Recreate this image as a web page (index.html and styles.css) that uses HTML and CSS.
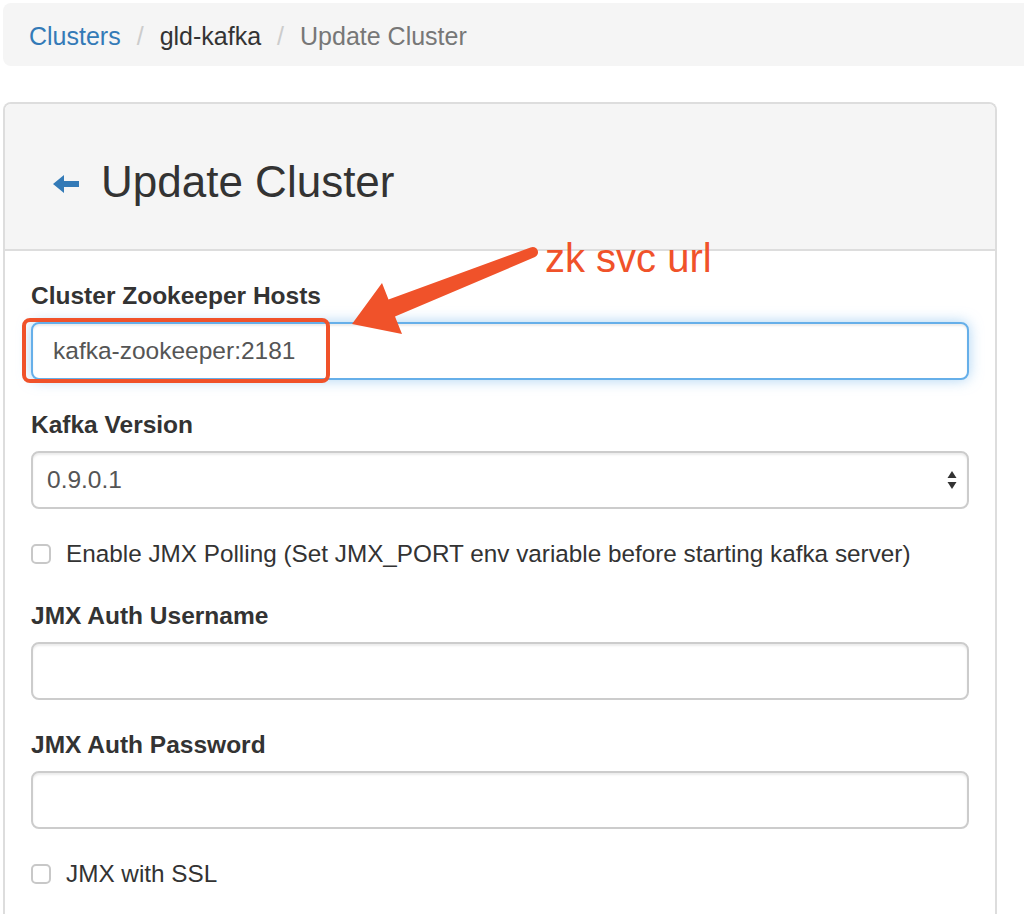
FILE: index.html
```html
<!DOCTYPE html>
<html>
<head>
<meta charset="utf-8">
<link rel="stylesheet" href="styles.css">
</head>
<body>
<div class="page">
  <nav class="breadcrumb">
    <a class="crumb-link">Clusters</a>
    <span class="sep">/</span>
    <span class="crumb">gld-kafka</span>
    <span class="sep">/</span>
    <span class="crumb-active">Update Cluster</span>
  </nav>

  <div class="panel">
    <div class="panel-heading">
      <svg class="back-icon" viewBox="0 0 26 20" width="26" height="20">
        <path d="M0 10 L11 1 L11 7 L26 7 L26 13 L11 13 L11 19 Z" fill="#337ab7"/>
      </svg>
      <h3 class="title">Update Cluster</h3>
    </div>
    <div class="panel-body">
      <div class="form-group">
        <label class="label">Cluster Zookeeper Hosts</label>
        <div class="input-wrap">
          <div class="input focused">kafka-zookeeper:2181</div>
          <div class="highlight-box"></div>
        </div>
      </div>
      <div class="form-group">
        <label class="label">Kafka Version</label>
        <div class="input select">
          <span>0.9.0.1</span>
          <svg class="select-arrows" viewBox="0 0 10 20" width="10" height="20">
            <path d="M5 1 L9.5 8 L0.5 8 Z" fill="#333"/>
            <path d="M5 19 L9.5 12 L0.5 12 Z" fill="#333"/>
          </svg>
        </div>
      </div>
      <div class="form-group checkbox-row">
        <span class="checkbox"></span>
        <span class="check-text">Enable JMX Polling (Set JMX_PORT env variable before starting kafka server)</span>
      </div>
      <div class="form-group">
        <label class="label">JMX Auth Username</label>
        <div class="input"></div>
      </div>
      <div class="form-group">
        <label class="label">JMX Auth Password</label>
        <div class="input"></div>
      </div>
      <div class="form-group checkbox-row">
        <span class="checkbox"></span>
        <span class="check-text">JMX with SSL</span>
      </div>
    </div>
  </div>

  <svg class="annotation" viewBox="0 0 1024 914" width="1024" height="914">
    <path d="M352 324 L382 283 L388.5 299.5 L530.5 247.5 A5.2 5.2 0 0 1 535 257 L395 316.5 L402 334 Z" fill="#f0522a"/>
  </svg>
  <div class="annotation-text">zk svc url</div>
</div>
</body>
</html>
```

FILE: styles.css
```css
html, body {
  margin: 0;
  padding: 0;
  background: #ffffff;
  overflow: hidden;
}

.page {
  position: relative;
  width: 1024px;
  height: 914px;
  overflow: hidden;
  font-family: "Liberation Sans", Arial, Helvetica, sans-serif;
  color: #333333;
}

.breadcrumb {
  margin: 3px 0 0 3px;
  width: 1060px;
  height: 63px;
  background: #f5f5f5;
  border-radius: 8px;
  display: flex;
  align-items: center;
  padding: 3px 0 0 26px;
  box-sizing: border-box;
  font-size: 25px;
}

.crumb-link {
  color: #337ab7;
}

.crumb {
  color: #333333;
}

.crumb-active {
  color: #777777;
}

.sep {
  color: #cccccc;
  margin: 0 16px;
}

.panel {
  margin: 36px 0 0 3px;
  width: 994px;
  box-sizing: border-box;
  border: 2px solid #dddddd;
  border-bottom: none;
  border-radius: 8px 8px 0 0;
  height: 830px;
}

.panel-heading {
  background: #f5f5f5;
  border-bottom: 2px solid #dddddd;
  border-radius: 6px 6px 0 0;
  padding: 54px 0 43px 48px;
  display: flex;
  align-items: center;
}

.back-icon {
  display: block;
  margin-right: 22px;
  margin-top: 4px;
}

.title {
  margin: 0;
  font-size: 44px;
  line-height: 48px;
  font-weight: normal;
  color: #333333;
}

.panel-body {
  padding: 28px 26px 0 26px;
}

.form-group {
  margin-bottom: 28px;
}

.label {
  display: block;
  font-size: 24.5px;
  line-height: 34px;
  font-weight: bold;
  margin-bottom: 9px;
  color: #333333;
}

.input-wrap {
  position: relative;
}

.input {
  height: 58px;
  box-sizing: border-box;
  border: 2px solid #cccccc;
  border-radius: 8px;
  box-shadow: inset 0 2px 2px rgba(0, 0, 0, 0.075);
  padding: 0 20px;
  font-size: 24.5px;
  color: #555555;
  display: flex;
  align-items: center;
  background: #ffffff;
}

.input.focused {
  border-color: #66afe9;
  box-shadow: inset 0 2px 2px rgba(0, 0, 0, 0.075), 0 0 14px rgba(102, 175, 233, 0.55);
}

.select {
  padding: 0 10px 0 14px;
  justify-content: space-between;
}

.select-arrows {
  display: block;
}

.highlight-box {
  position: absolute;
  left: -9px;
  top: -4px;
  width: 308px;
  height: 65px;
  box-sizing: border-box;
  border: 4px solid #f0522a;
  border-radius: 8px;
}

.checkbox-row {
  display: flex;
  align-items: center;
  height: 34px;
}

.checkbox {
  width: 20px;
  height: 20px;
  box-sizing: border-box;
  border: 2px solid #c8c8c8;
  border-radius: 5px;
  background: #ffffff;
  margin-right: 15px;
}

.check-text {
  font-size: 24.3px;
  color: #333333;
}

.annotation {
  position: absolute;
  left: 0;
  top: 0;
  pointer-events: none;
}

.annotation-text {
  position: absolute;
  left: 545px;
  top: 234px;
  font-size: 40px;
  line-height: 48px;
  color: #f0522a;
}
```
